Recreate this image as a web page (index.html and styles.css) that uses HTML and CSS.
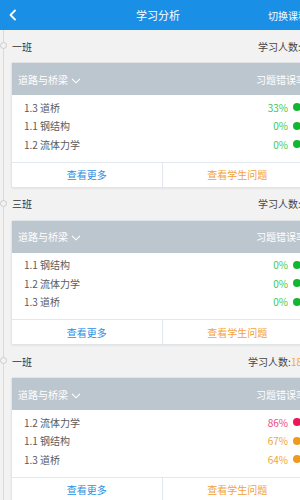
FILE: index.html
```html
<!DOCTYPE html>
<html lang="zh">
<head>
    <meta charset="UTF-8">
    <meta name="viewport" content="width=device-width, initial-scale=1.0">
    <title>学习分析</title>
    <link rel="stylesheet" href="styles.css">
</head>
<body>
    <div class="page">
        <div class="topbar">
            <span class="back">
                <svg width="10" height="12" viewBox="0 0 10 12"><path d="M7 1.5 L2.5 6 L7 10.5" fill="none" stroke="#fff" stroke-width="1.8" stroke-linecap="round" stroke-linejoin="round"/></svg>
            </span>
            <span class="title">学习分析</span>
            <span class="switch">切换课程</span>
        </div>

        <div class="timeline">
            <div class="section">
                <div class="class-row">
                    <span class="node"></span>
                    <span class="class-name">一班</span>
                    <span class="count">学习人数:<em>12</em></span>
                </div>
                <div class="card">
                    <div class="card-head">
                        <span>道路与桥梁 <svg class="chev" width="10" height="6" viewBox="0 0 10 6"><path d="M1 0.8 L5 4.8 L9 0.8" fill="none" stroke="#fff" stroke-width="1.1"/></svg></span>
                        <span>习题错误率</span>
                    </div>
                    <ul class="rows">
                        <li><span>1.3 道桥</span><span class="pct green">33%</span><i class="dot green"></i></li>
                        <li><span>1.1 钢结构</span><span class="pct green">0%</span><i class="dot green"></i></li>
                        <li><span>1.2 流体力学</span><span class="pct green">0%</span><i class="dot green"></i></li>
                    </ul>
                    <div class="card-foot">
                        <span class="more">查看更多</span>
                        <span class="issues">查看学生问题</span>
                    </div>
                </div>
            </div>

            <div class="section">
                <div class="class-row">
                    <span class="node"></span>
                    <span class="class-name">三班</span>
                    <span class="count">学习人数:<em>12</em></span>
                </div>
                <div class="card">
                    <div class="card-head">
                        <span>道路与桥梁 <svg class="chev" width="10" height="6" viewBox="0 0 10 6"><path d="M1 0.8 L5 4.8 L9 0.8" fill="none" stroke="#fff" stroke-width="1.1"/></svg></span>
                        <span>习题错误率</span>
                    </div>
                    <ul class="rows">
                        <li><span>1.1 钢结构</span><span class="pct green">0%</span><i class="dot green"></i></li>
                        <li><span>1.2 流体力学</span><span class="pct green">0%</span><i class="dot green"></i></li>
                        <li><span>1.3 道桥</span><span class="pct green">0%</span><i class="dot green"></i></li>
                    </ul>
                    <div class="card-foot">
                        <span class="more">查看更多</span>
                        <span class="issues">查看学生问题</span>
                    </div>
                </div>
            </div>

            <div class="section">
                <div class="class-row">
                    <span class="node"></span>
                    <span class="class-name">一班</span>
                    <span class="count">学习人数:<em>18人</em></span>
                </div>
                <div class="card">
                    <div class="card-head">
                        <span>道路与桥梁 <svg class="chev" width="10" height="6" viewBox="0 0 10 6"><path d="M1 0.8 L5 4.8 L9 0.8" fill="none" stroke="#fff" stroke-width="1.1"/></svg></span>
                        <span>习题错误率</span>
                    </div>
                    <ul class="rows">
                        <li><span>1.2 流体力学</span><span class="pct pink">86%</span><i class="dot pink"></i></li>
                        <li><span>1.1 钢结构</span><span class="pct orange">67%</span><i class="dot orange"></i></li>
                        <li><span>1.3 道桥</span><span class="pct orange">64%</span><i class="dot orange"></i></li>
                    </ul>
                    <div class="card-foot">
                        <span class="more">查看更多</span>
                        <span class="issues">查看学生问题</span>
                    </div>
                </div>
            </div>
        </div>
    </div>
</body>
</html>
```

FILE: styles.css
```css
html, body {
    margin: 0;
    overflow: hidden;
    background: #f2f2f2;
}
body {
    font-family: "Noto Sans CJK SC", "Noto Sans", Roboto, sans-serif;
    font-size: 10px;
    color: #444;
}
.page {
    width: 320px;
}
.topbar {
    height: 30px;
    background: #1a8fe6;
    display: flex;
    align-items: center;
    color: #fff;
}
.back {
    width: 22px;
    display: flex;
    justify-content: center;
    padding-left: 2px;
}
.title {
    flex: 1;
    text-align: center;
    font-size: 11px;
    padding-left: 24px;
}
.switch {
    font-size: 10px;
    width: 52px;
}
.timeline {
    margin-left: 3px;
    border-left: 1.5px solid #dadada;
    padding-left: 7px;
    padding-right: 7px;
}
.class-row {
    height: 32px;
    display: flex;
    align-items: center;
    position: relative;
}
.node {
    position: absolute;
    left: -11.5px;
    top: 12px;
    width: 7px;
    height: 7px;
    border: 1.3px solid #cdcdcd;
    border-radius: 50%;
    background: #f2f2f2;
    box-sizing: border-box;
}
.class-name {
    flex: 1;
    color: #333;
    padding-left: 1px;
}
.count {
    color: #444;
    padding-right: 1px;
}
.count em {
    font-style: normal;
    color: #f5a623;
}
.card {
    background: #fff;
    border: 1px solid #e2e5e8;
    border-radius: 2px;
    box-shadow: 0 1px 2px rgba(0, 0, 0, 0.06);
}
.card-head {
    height: 32px;
    background: #bcc6cf;
    color: #fff;
    display: flex;
    justify-content: space-between;
    align-items: center;
    padding: 0 6px;
}
.chev {
    margin-left: 1px;
    vertical-align: middle;
}
.rows {
    list-style: none;
    margin: 0;
    padding: 3px 0 8px;
}
.rows li {
    height: 18.5px;
    display: flex;
    align-items: center;
    padding-left: 12px;
    padding-right: 11px;
    color: #5a5a5a;
}
.rows li span:first-child {
    flex: 1;
}
.pct {
    margin-right: 5px;
}
.dot {
    width: 8px;
    height: 8px;
    border-radius: 50%;
}
.pct.green { color: #3cc95a; }
.dot.green { background: #12b631; }
.pct.pink { color: #f0477a; }
.dot.pink { background: #f01357; }
.pct.orange { color: #f0a43a; }
.dot.orange { background: #ef9a1e; }
.card-foot {
    height: 24px;
    border-top: 1px solid #e3e8ee;
    display: flex;
}
.card-foot span {
    flex: 1;
    display: flex;
    align-items: center;
    justify-content: center;
}
.more {
    color: #2b8fe3;
    border-right: 1px solid #e3e8ee;
}
.issues {
    color: #f2a238;
}
```
